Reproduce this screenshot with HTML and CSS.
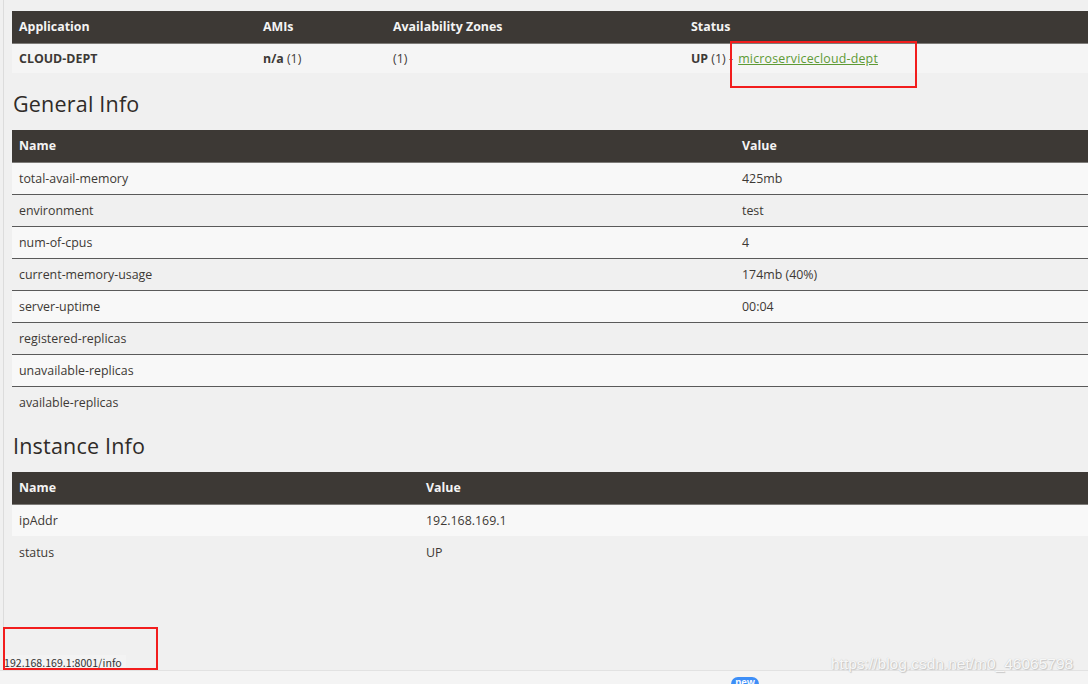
FILE: index.html
```html
<!DOCTYPE html>
<html>
<head>
<meta charset="utf-8">
<link rel="stylesheet" href="styles.css">
</head>
<body>
<div class="page">
  <div class="content">
    <table class="tbl apps">
      <colgroup><col class="c1"><col class="c2"><col class="c3"><col></colgroup>
      <thead><tr><th>Application</th><th>AMIs</th><th>Availability Zones</th><th>Status</th></tr></thead>
      <tbody><tr class="odd"><td><b>CLOUD-DEPT</b></td><td><b>n/a</b> (1)</td><td>(1)</td><td><b>UP</b> (1) - <a href="#">microservicecloud-dept</a></td></tr></tbody>
    </table>
    <h1 class="h-general">General Info</h1>
    <table class="tbl general">
      <colgroup><col class="g1"><col></colgroup>
      <thead><tr><th>Name</th><th>Value</th></tr></thead>
      <tbody>
        <tr class="odd"><td>total-avail-memory</td><td>425mb</td></tr>
        <tr><td>environment</td><td>test</td></tr>
        <tr class="odd"><td>num-of-cpus</td><td>4</td></tr>
        <tr><td>current-memory-usage</td><td>174mb (40%)</td></tr>
        <tr class="odd"><td>server-uptime</td><td>00:04</td></tr>
        <tr><td>registered-replicas</td><td></td></tr>
        <tr class="odd"><td>unavailable-replicas</td><td></td></tr>
        <tr class="last"><td>available-replicas</td><td></td></tr>
      </tbody>
    </table>
    <h1 class="h-instance">Instance Info</h1>
    <table class="tbl instance">
      <colgroup><col class="i1"><col></colgroup>
      <thead><tr><th>Name</th><th>Value</th></tr></thead>
      <tbody>
        <tr class="odd"><td>ipAddr</td><td>192.168.169.1</td></tr>
        <tr><td>status</td><td>UP</td></tr>
      </tbody>
    </table>
  </div>
  <div class="statusbar"><span class="url">192.168.169.1:8001/info</span></div>
  <div class="bottom"><span class="new">new</span></div>
  <div class="mark box-link"></div>
  <div class="mark box-url"></div>
  <div class="watermark">https://blog.csdn.net/m0_46065798</div>
</div>
</body>
</html>
```

FILE: styles.css
```css
html, body {
  margin: 0;
  padding: 0;
  background: #f0f0f0;
  overflow: hidden;
}
.page {
  position: relative;
  width: 1088px;
  height: 684px;
  overflow: hidden;
  font-family: "Open Sans", "Liberation Sans", sans-serif;
  color: #3d3935;
}
.content {
  margin-left: 3px;
  height: 627px;
  border-left: 1px solid #dcdcdc;
  padding: 11px 0 0 8px;
  box-sizing: border-box;
}
.tbl {
  border-collapse: collapse;
  table-layout: fixed;
  width: 1120px;
  font-size: 12.4px;
}
.tbl th {
  background: #3d3935;
  color: #f4f4f4;
  font-weight: bold;
  text-align: left;
  height: 32px;
  padding: 0 7px;
  box-sizing: border-box;
  border-bottom: 1px solid #7d7b78;
}
.tbl td {
  height: 32px;
  padding: 0 7px;
  box-sizing: border-box;
  color: #3d3935;
}
.apps td { height: 30px; }
.apps .c1 { width: 244px; }
.apps .c2 { width: 130px; }
.apps .c3 { width: 298px; }
.general .g1 { width: 723px; }
.instance .i1 { width: 407px; }
tr.odd td { background: #f8f8f8; }
.apps tr.odd td { background: #f5f5f5; }
.general tbody tr td { border-bottom: 1px solid #5a5a5a; height: 32px; }
.general tbody tr.last td { border-bottom: none; }
a {
  color: #5e9a35;
  text-decoration: underline;
  margin-left: 2px;
  letter-spacing: 0.2px;
}
h1 {
  font-size: 21.5px;
  font-weight: 500;
  line-height: 24px;
  margin: 0;
  color: #2f2b28;
  padding-left: 1px;
  letter-spacing: 0.2px;
}
.h-general { margin: 19px 0 14px; }
.h-instance { margin: 16px 0 14px; }
.statusbar {
  position: absolute;
  left: 3px;
  top: 655px;
  height: 15px;
  background: #f3f3f3;
  padding: 0 4px 0 1px;
  font-family: "Noto Sans CJK SC", "Liberation Sans", sans-serif;
  font-size: 10.6px;
  line-height: 15px;
  color: #333;
}
.bottom {
  position: absolute;
  left: 0;
  top: 670px;
  width: 1088px;
  height: 14px;
  background: #f4f4f4;
  border-top: 1px solid #e2e2e2;
}
.new {
  position: absolute;
  left: 731px;
  top: 6px;
  width: 28px;
  height: 14px;
  border-radius: 7px;
  background: #3d8ef7;
  color: #fff;
  font-family: "Liberation Sans", sans-serif;
  font-size: 10px;
  font-weight: bold;
  line-height: 11px;
  text-align: center;
}
.mark {
  position: absolute;
  border: 2px solid #f21d1d;
  box-sizing: border-box;
}
.box-link { left: 730px; top: 41px; width: 187px; height: 47px; }
.box-url { left: 3px; top: 627px; width: 155px; height: 43px; }
.watermark {
  position: absolute;
  left: 831px;
  top: 655px;
  font-family: "Liberation Sans", sans-serif;
  font-size: 15.5px;
  color: rgba(255,255,255,0.9);
  text-shadow: 0 0 1px #bbb, 1px 1px 1px #c8c8c8;
  white-space: nowrap;
}
```
